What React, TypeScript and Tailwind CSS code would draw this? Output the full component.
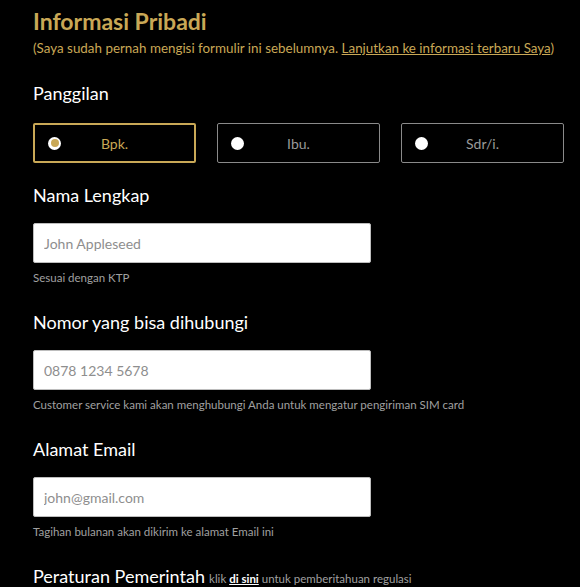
import React from "react";

const font = { fontFamily: "Lato, 'Open Sans', sans-serif" };

function Radio({ label, selected }: { label: string; selected?: boolean }) {
  return (
    <label
      className={
        "flex h-[40px] w-[163px] items-center rounded-[2px] px-[13px] " +
        (selected ? "border-2 border-[#c9a856]" : "border border-[#8a8a8a]")
      }
    >
      <span className="flex h-[13px] w-[13px] shrink-0 items-center justify-center rounded-full bg-white">
        {selected && <span className="h-[8px] w-[8px] rounded-full bg-[#c9a856]" />}
      </span>
      <span className={"flex-1 pr-[13px] text-center text-[14px] " + (selected ? "text-[#c9a856]" : "text-[#9a9a9a]")}>
        {label}
      </span>
    </label>
  );
}

function Field({ label, placeholder, help }: { label: string; placeholder: string; help: string }) {
  return (
    <div>
      <div className="text-[18px] leading-[24px] text-white">{label}</div>
      <input
        className="mt-[16px] block h-[40px] w-[338px] rounded-[2px] border border-[#bdbdbd] bg-white px-[10px] text-[14px] text-[#333] outline-none placeholder:text-[#8e8e8e]"
        placeholder={placeholder}
        style={font}
      />
      <div className="mt-[7px] text-[11.5px] leading-[16px] text-[#a0a0a0]">{help}</div>
    </div>
  );
}

export default function App() {
  return (
    <div className="min-h-[587px] w-[580px] bg-black pl-[33px] pt-[6px]" style={font}>
      <h1 className="text-[23px] font-bold leading-[30px] text-[#c9a856]">Informasi Pribadi</h1>
      <p className="mt-[3px] text-[13.4px] leading-[18px] text-[#c9a856]">
        (Saya sudah pernah mengisi formulir ini sebelumnya.{" "}
        <a className="underline">Lanjutkan ke informasi terbaru Saya</a>)
      </p>
      <div className="mt-[24px] text-[18px] leading-[24px] text-white">Panggilan</div>
      <div className="mt-[18px] flex gap-[21px]">
        <Radio label="Bpk." selected />
        <Radio label="Ibu." />
        <Radio label="Sdr/i." />
      </div>
      <div className="mt-[20px] flex flex-col gap-[24px]">
        <Field label="Nama Lengkap" placeholder="John Appleseed" help="Sesuai dengan KTP" />
        <Field
          label="Nomor yang bisa dihubungi"
          placeholder="0878 1234 5678"
          help="Customer service kami akan menghubungi Anda untuk mengatur pengiriman SIM card"
        />
        <Field label="Alamat Email" placeholder="john@gmail.com" help="Tagihan bulanan akan dikirim ke alamat Email ini" />
        <div className="text-white">
          <span className="text-[18px] leading-[24px]">Peraturan Pemerintah</span>{" "}
          <span className="text-[11.5px] text-[#a0a0a0]">
            klik <a className="font-bold text-white underline">di sini</a> untuk pemberitahuan regulasi
          </span>
        </div>
      </div>
    </div>
  );
}
